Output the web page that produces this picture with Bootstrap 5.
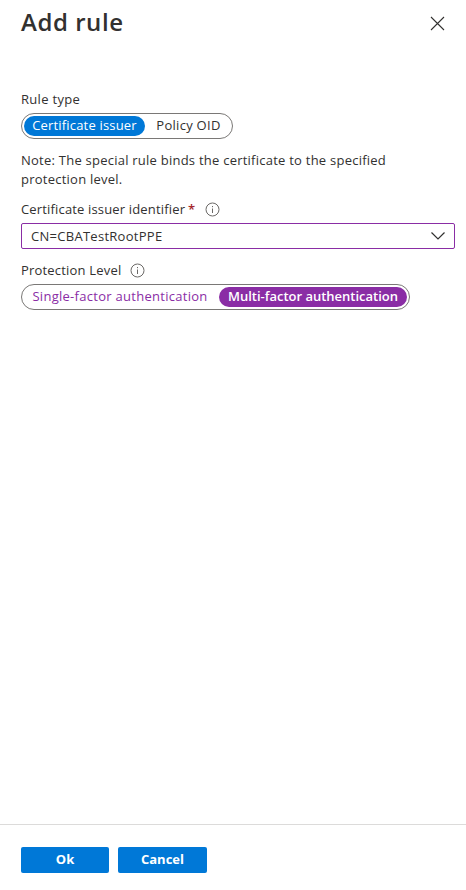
<!DOCTYPE html>
<html lang="en">
<head>
<meta charset="utf-8">
<meta name="viewport" content="width=device-width, initial-scale=1">
<title>Add rule</title>
<link href="https://cdn.jsdelivr.net/npm/bootstrap@5.3.0/dist/css/bootstrap.min.css" rel="stylesheet">
<style>
body{font-family:"Segoe UI","Open Sans","Noto Sans",sans-serif;font-size:13px;line-height:19px;color:#323130;background:#fff}
.panel{height:890px;padding-left:21px}
.panel-head{height:90px;padding-right:21px}
.panel-title{font-size:24px;line-height:32px;font-weight:600;margin-top:6px;letter-spacing:.55px}
.close-x{width:15px;height:15px;margin-top:16px}
.label-row{height:23px;letter-spacing:.19px}
.label-row.first{letter-spacing:.3px}
.label-row.issuer{margin-top:11px;padding-bottom:4px;letter-spacing:.16px}
.label-row.level{margin-top:12px;padding-bottom:4px}
.info-icon{width:15px;height:15px;margin-left:9px;fill:none;stroke:#6b6967}
.issuer .info-icon{margin-left:10px}
.switch{height:26px;border:1px solid #7a7876;border-radius:13px;padding:2px}
.rule-switch{width:212px}
.level-switch{width:389px}
.switch .btn{height:20px;line-height:18px;font-size:13px;padding:0 0 2px;border:0;border-radius:10px;color:#323130;white-space:nowrap;letter-spacing:.28px}
.switch .policy{padding-left:2px}
.switch .on-blue{background:#0078d7;color:#fff;width:121px;letter-spacing:.18px}
.switch .on-purple{background:#8a2da5;color:#fff;width:188px;font-weight:600;letter-spacing:-.01px}
.switch .off-purple{color:#8a2da5;width:195px;padding-right:3px}
.note{margin-top:12px;letter-spacing:.24px}
.issuer-field{width:434px;height:26px;border:1px solid #8a2da5;border-radius:2px;background:#fff;padding:0 8px 0 9px;line-height:24px;letter-spacing:.28px}
.req{color:#a4262c;font-weight:600;margin-left:3px}
.panel-foot{height:66px;border-top:1px solid #dcdbda;margin-left:-21px;padding:22px 0 0 21px;gap:9px}
.panel-foot .btn{height:26px;padding:0 0 2px;border:0;border-radius:2px;background:#0078d7;font-size:13px;line-height:24px;font-weight:700;color:#fff}
.btn-ok{width:88px}
.btn-cancel{width:89px}
</style>
</head>
<body>
<div class="panel d-flex flex-column">
  <header class="panel-head d-flex justify-content-between align-items-start">
    <h1 class="panel-title mb-0">Add rule</h1>
    <button type="button" class="btn p-0 border-0 d-flex" aria-label="Close"><svg class="close-x" viewBox="0 0 15 15" fill="none" stroke="#323130" stroke-width="1.1"><path d="M1 1l13 13M14 1L1 14"/></svg></button>
  </header>
  <main class="flex-grow-1">
    <div class="label-row first">Rule type</div>
    <div class="switch rule-switch d-inline-flex align-items-center align-top">
      <button type="button" class="btn on-blue">Certificate issuer</button>
      <button type="button" class="btn policy flex-grow-1">Policy OID</button>
    </div>
    <p class="note mb-0">Note: The special rule binds the certificate to the specified<br>protection level.</p>
    <div class="label-row issuer d-flex align-items-center">
      <span>Certificate issuer identifier</span><span class="req">*</span>
      <svg class="info-icon" viewBox="0 0 15 15"><circle cx="7.5" cy="7.5" r="6.5"/><path d="M7.500 6.500V11M7.500 4v1.200"/></svg>
    </div>
    <div class="issuer-field d-flex align-items-center justify-content-between" role="combobox">
      <span>CN=CBATestRootPPE</span>
      <svg width="16" height="10" viewBox="0 0 16 10" fill="none" stroke="#323130" stroke-width="1.2"><path d="M1.5 1.5L8 8l6.500-6.500"/></svg>
    </div>
    <div class="label-row level d-flex align-items-center">
      <span>Protection Level</span>
      <svg class="info-icon" viewBox="0 0 15 15"><circle cx="7.5" cy="7.5" r="6.5"/><path d="M7.500 6.500V11M7.500 4v1.200"/></svg>
    </div>
    <div class="switch level-switch d-inline-flex align-items-center align-top">
      <button type="button" class="btn off-purple">Single-factor authentication</button>
      <button type="button" class="btn on-purple">Multi-factor authentication</button>
    </div>
  </main>
  <footer class="panel-foot d-flex align-items-start">
    <button type="button" class="btn btn-ok">Ok</button>
    <button type="button" class="btn btn-cancel">Cancel</button>
  </footer>
</div>
<script src="https://cdn.jsdelivr.net/npm/bootstrap@5.3.0/dist/js/bootstrap.bundle.min.js"></script>
</body>
</html>
